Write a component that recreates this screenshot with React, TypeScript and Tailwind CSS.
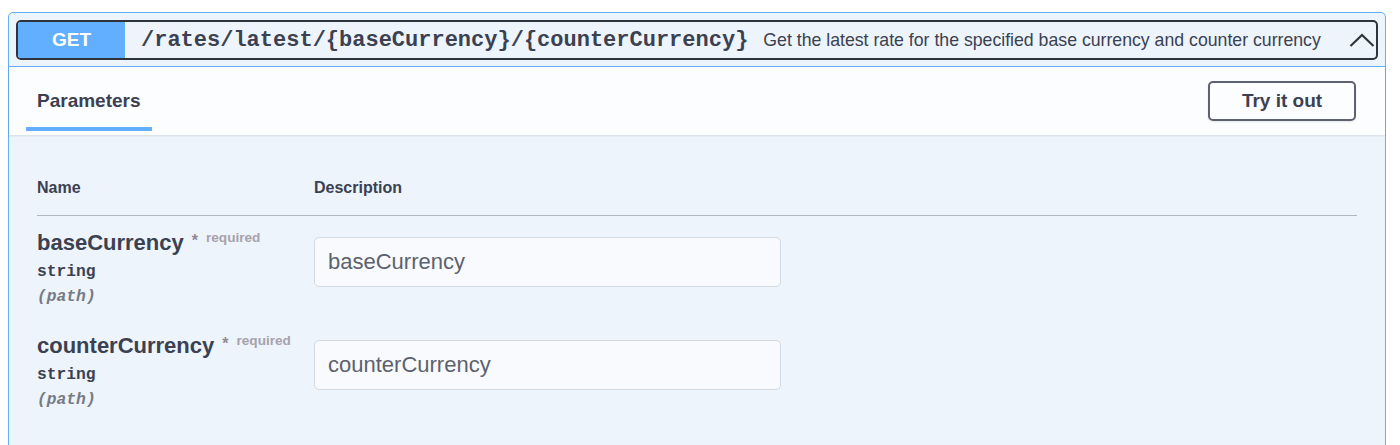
import React from "react";

type Param = {
    name: string;
    type: string;
    location: string;
};

const PARAMS: Param[] = [
    { name: "baseCurrency", type: "string", location: "path" },
    { name: "counterCurrency", type: "string", location: "path" },
];

function ChevronUp() {
    return (
        <svg width="26" height="14" viewBox="0 0 26 14" fill="none" className="mr-[1px]">
            <polyline points="1.5,13 13,2 24.5,13" stroke="#2f333d" strokeWidth="2.2" strokeLinejoin="miter" />
        </svg>
    );
}

function ParamRow({ param }: { param: Param }) {
    return (
        <div className="grid grid-cols-[277px_1fr] pt-[14px] pb-[12px]">
            <div>
                <div className="h-[26px] leading-[26px] whitespace-nowrap">
                    <span className="text-[22px] font-bold">{param.name}</span>
                    <span className="ml-[8px] text-[16px] leading-none font-bold text-[#8f8b95] align-[4px]">*</span>
                    <span className="ml-[8px] text-[13.6px] leading-none font-bold text-[#a7a2ab] align-[8px]">required</span>
                </div>
                <div className="mt-[6px] font-['Liberation_Mono',monospace] text-[16.3px] font-bold leading-[20px]">
                    {param.type}
                </div>
                <div className="mt-[5px] font-['Liberation_Mono',monospace] text-[16.3px] font-bold italic leading-[20px] text-[#777b85]">
                    ({param.location})
                </div>
            </div>
            <div>
                <input
                    type="text"
                    placeholder={param.name}
                    className="mt-[7px] h-[50px] w-[467px] rounded-[5px] border border-[#d5d9e0] bg-[#f8fafd] pl-[13px] text-[22px] outline-none placeholder:text-[#5d616d]"
                />
            </div>
        </div>
    );
}

export default function App() {
    return (
        <div className="min-h-[445px] bg-white pt-[12px] pl-[8px] font-['Liberation_Sans',Arial,sans-serif] text-[#3b4151]">
            <div className="w-[1378px] rounded-[5px] border border-[#61affe] bg-[#edf4fc] pb-[30px]">
                {/* Summary bar */}
                <div className="border-b border-[#61affe] px-[7px] pt-[7px] pb-[6px]">
                    <div className="flex h-[40px] items-center rounded-[5px] border-2 border-[#2f333d]">
                        <span className="flex h-full w-[107px] shrink-0 items-center justify-center rounded-l-[3px] bg-[#61affe] text-[19px] font-bold text-white">
                            GET
                        </span>
                        <span className="ml-[16px] font-['Liberation_Mono',monospace] text-[22px] font-bold whitespace-nowrap">
                            /rates/latest/{"{baseCurrency}"}/{"{counterCurrency}"}
                        </span>
                        <span className="ml-[15px] text-[17.7px] whitespace-nowrap">
                            Get the latest rate for the specified base currency and counter currency
                        </span>
                        <div className="ml-auto">
                            <ChevronUp />
                        </div>
                    </div>
                </div>

                {/* Section header */}
                <div className="relative flex h-[68px] items-center justify-between bg-[#fbfdff] pl-[17px] pr-[29px] shadow-[0_1px_2px_rgba(0,0,0,0.1)]">
                    <div className="flex h-full w-[126px] flex-col pt-[23px]">
                        <h4 className="pl-[11px] text-[19px] font-bold leading-[22px]">Parameters</h4>
                        <div className="mt-[15px] h-[4px] bg-[#61affe]" />
                    </div>
                    <button className="h-[40px] w-[148px] rounded-[5px] border-2 border-[#5d6270] text-[19px] font-bold shadow-[0_1px_2px_rgba(0,0,0,0.1)]">
                        Try it out
                    </button>
                </div>

                {/* Parameters table */}
                <div className="px-[28px] pt-[43px]">
                    <div className="grid grid-cols-[277px_1fr] border-b border-[#b1b5bd] pb-[17px] text-[16px] font-bold leading-[20px]">
                        <div>Name</div>
                        <div>Description</div>
                    </div>
                    {PARAMS.map((p) => (
                        <ParamRow key={p.name} param={p} />
                    ))}
                </div>
            </div>
        </div>
    );
}
